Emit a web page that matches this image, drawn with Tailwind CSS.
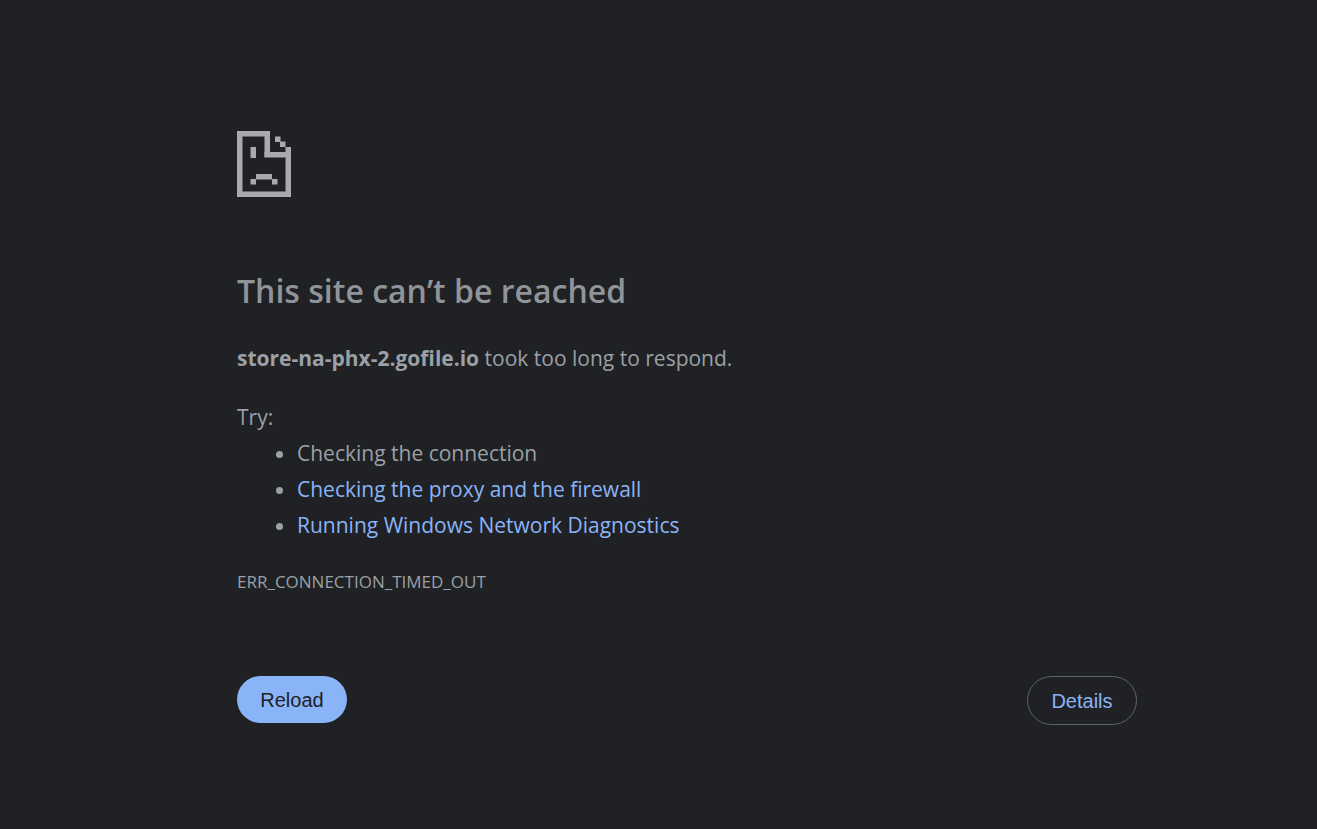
<!DOCTYPE html>
<html lang="en">
<head>
<meta charset="utf-8">
<title>This site can't be reached</title>
<script src="https://cdn.jsdelivr.net/npm/@tailwindcss/browser@4"></script>
</head>
<body class="bg-[#202124] m-0 h-[829px] overflow-hidden font-['Open_Sans','Noto_Sans',sans-serif] text-[#9aa0a6]">
<main class="ml-[237px] w-[900px] pt-[131px] flex flex-col">
  <svg class="block" width="54" height="66" viewBox="0 0 54 66" fill="#a8aaab" aria-hidden="true">
    <rect x="0" y="0" width="33" height="5.5"/>
    <rect x="0" y="0" width="5.5" height="66"/>
    <rect x="0" y="60.5" width="54" height="5.5"/>
    <rect x="48.5" y="21.5" width="5.5" height="44.5"/>
    <rect x="27.5" y="0" width="5.5" height="26"/>
    <rect x="27.5" y="21" width="26.5" height="5.5"/>
    <rect x="38" y="5.5" width="5.5" height="5.5"/>
    <rect x="43" y="10.5" width="5.5" height="5.5"/>
    <rect x="48.5" y="16" width="5.5" height="5.5"/>
    <rect x="13.5" y="16" width="5.5" height="11"/>
    <rect x="19" y="43" width="16" height="5.5"/>
    <rect x="13.5" y="48" width="5.5" height="5.5"/>
    <rect x="35" y="48" width="5.5" height="5.5"/>
  </svg>
  <h1 class="mt-[71px] text-[32px] leading-[45px] font-semibold text-[#8f9499]">This site can’t be reached</h1>
  <p class="mt-[27px] text-[21px] leading-[36px]"><strong class="font-bold">store-na-phx-2.gofile.io</strong> took too long to respond.</p>
  <p class="mt-[23px] text-[21px] leading-[36px]">Try:</p>
  <ul class="list-disc pl-[60px] text-[21px] leading-[36px] marker:text-[#9aa0a6]">
    <li>Checking the connection</li>
    <li><a href="#" class="text-[#8ab4f8]">Checking the proxy and the firewall</a></li>
    <li><a href="#" class="text-[#8ab4f8]">Running Windows Network Diagnostics</a></li>
  </ul>
  <p class="mt-[27px] text-[17px] leading-[24px]">ERR_CONNECTION_TIMED_OUT</p>
  <div class="mt-[82px] flex items-start justify-between font-['Liberation_Sans',sans-serif] text-[20px]">
    <button class="w-[110px] h-[47px] rounded-full bg-[#8ab4f8] text-[#202124]">Reload</button>
    <button class="w-[110px] h-[49px] rounded-full border border-[#5f6368] text-[#8ab4f8]">Details</button>
  </div>
</main>
</body>
</html>
